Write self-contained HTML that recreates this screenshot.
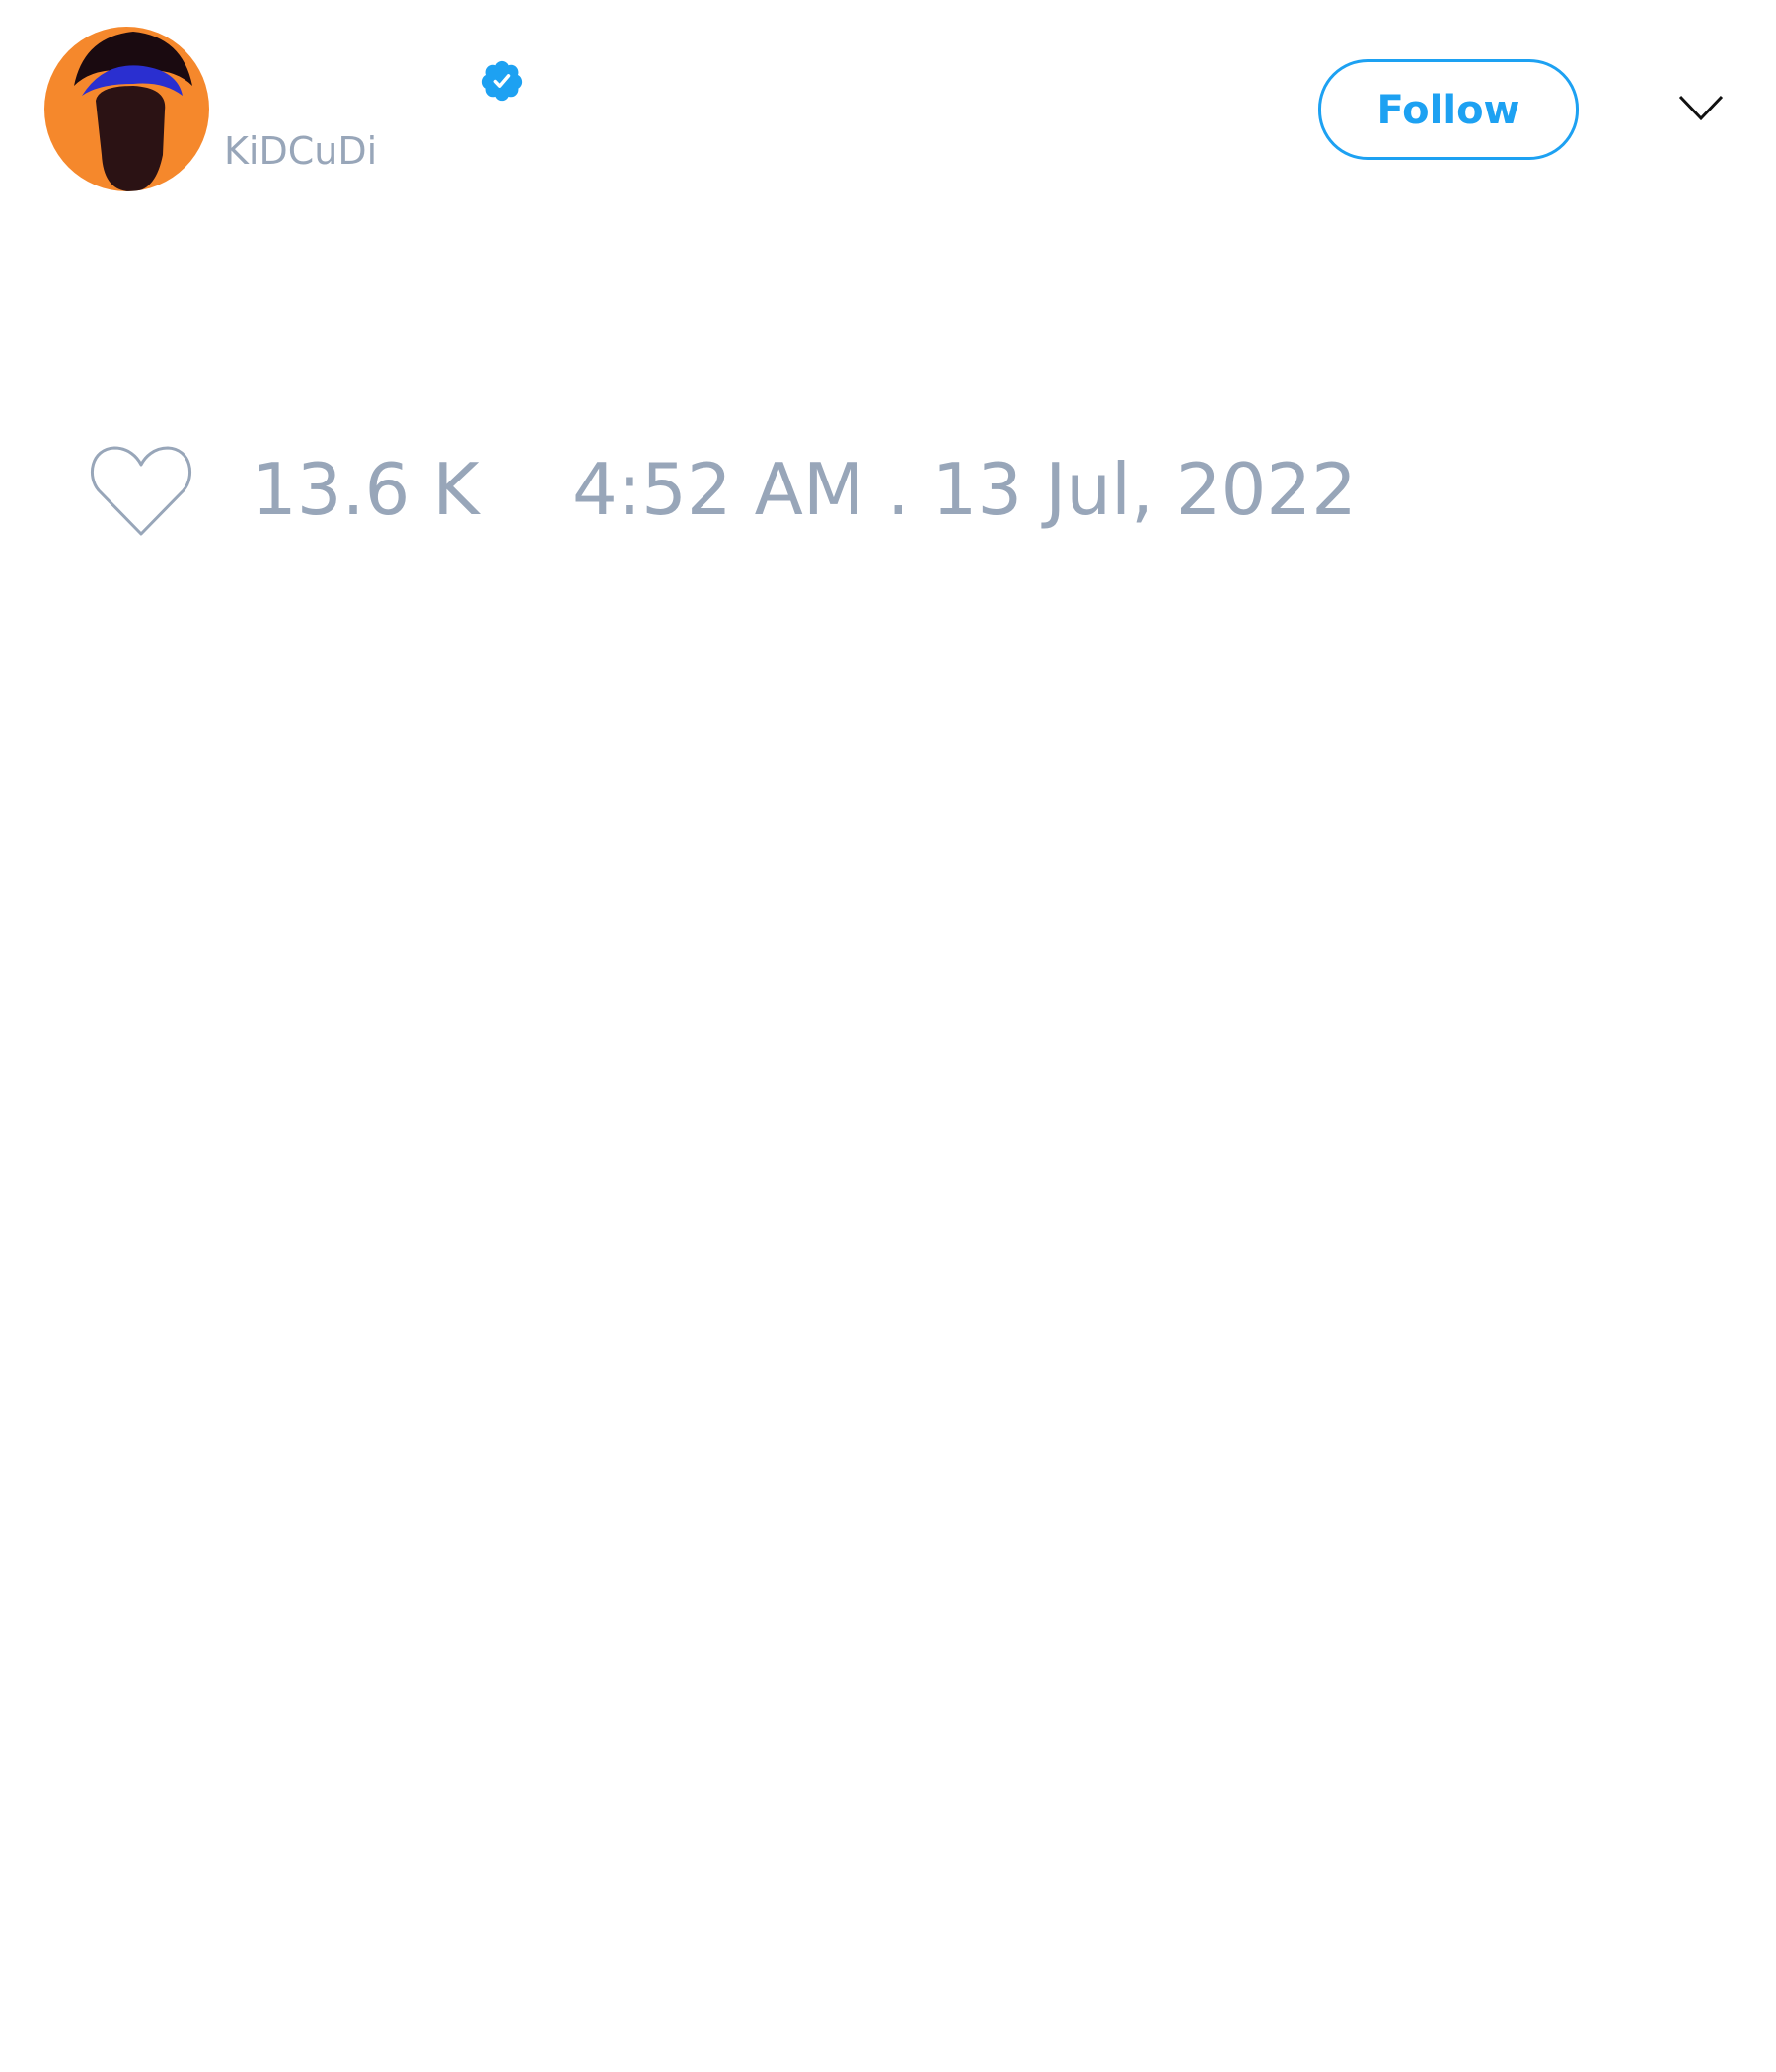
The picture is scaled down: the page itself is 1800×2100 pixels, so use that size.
<!DOCTYPE html>
<html><head><meta charset="utf-8"><style>
html,body{margin:0;padding:0;background:#fff;width:1800px;height:2100px;overflow:hidden;font-family:"DejaVu Sans","Liberation Sans",sans-serif;}
.abs{position:absolute;}
.av{left:45px;top:27px;width:167px;height:167px;border-radius:50%;overflow:hidden;}
.name{left:227px;top:134px;font-size:38px;color:#98a6b9;line-height:1;}
.btn{left:1336px;top:60px;width:258px;height:96px;border:3px solid #1da1f2;border-radius:50px;color:#1da1f2;font-weight:bold;font-size:40px;text-align:center;line-height:98px;}
.meta{top:460px;font-size:72px;color:#98a6b9;line-height:1;white-space:pre;}
</style></head><body>
<div class="abs av">
<svg width="167" height="167" viewBox="0 0 167 167">
<rect width="167" height="167" fill="#f5882c"/>
<path d="M30 60 Q40 10 90 5 Q140 10 150 60 Q130 40 90 45 Q50 40 30 60Z" fill="#1a0a10"/>
<path d="M38 70 Q60 35 100 40 Q135 45 140 70 Q120 55 90 58 Q55 58 38 70Z" fill="#2a2fd0"/>
<path d="M52 75 Q55 60 90 60 Q125 62 122 85 L120 130 Q112 170 85 167 Q60 165 58 130Z" fill="#2b1214"/>
</svg>
</div>
<div class="abs name">KiDCuDi</div>
<svg class="abs" style="left:486px;top:59px" width="46" height="46" viewBox="0 0 24 24">
<path fill="#1da1f2" d="M22.5 12.5c0-1.58-.875-2.95-2.148-3.6.154-.435.238-.905.238-1.4 0-2.210-1.71-3.998-3.818-3.998-.47 0-.92.084-1.336.25C14.818 2.415 13.51 1.5 12 1.5s-2.816.917-3.437 2.250c-.415-.165-.866-.25-1.336-.25-2.11 0-3.818 1.79-3.818 4 0 .494.083.964.237 1.4-1.272.65-2.147 2.018-2.147 3.6 0 1.495.782 2.798 1.942 3.486-.02.17-.032.34-.032.514 0 2.21 1.708 4 3.818 4 .47 0 .92-.086 1.335-.25.62 1.334 1.926 2.25 3.437 2.25 1.512 0 2.818-.916 3.437-2.25.415.163.865.248 1.336.248 2.11 0 3.818-1.79 3.818-4 0-.174-.012-.344-.033-.513 1.158-.687 1.943-1.99 1.943-3.484z"/>
<path fill="none" stroke="#fff" stroke-width="1.8" stroke-linecap="round" stroke-linejoin="round" d="M8.5 12.3l2.3 2.4 4.6-5.4"/>
</svg>
<div class="abs btn">Follow</div>
<svg class="abs" style="left:1700px;top:94px" width="48" height="32" viewBox="0 0 48 32">
<path d="M3 4 L24 26 L45 4" fill="none" stroke="#111" stroke-width="3"/>
</svg>
<svg class="abs" style="left:90px;top:449px" width="106" height="96" viewBox="0 0 106 96">
<path d="M53 92 L10 48 C-2 34 2 6 26 5 C40 5 49 14 53 22 C57 14 66 5 80 5 C104 6 108 34 96 48 Z" fill="none" stroke="#98a6b9" stroke-width="3" stroke-linejoin="round"/>
</svg>
<div class="abs meta" style="left:255px">13.6 K</div>
<div class="abs meta" style="left:580px">4:52 AM . 13 Jul, 2022</div>
</body></html>
